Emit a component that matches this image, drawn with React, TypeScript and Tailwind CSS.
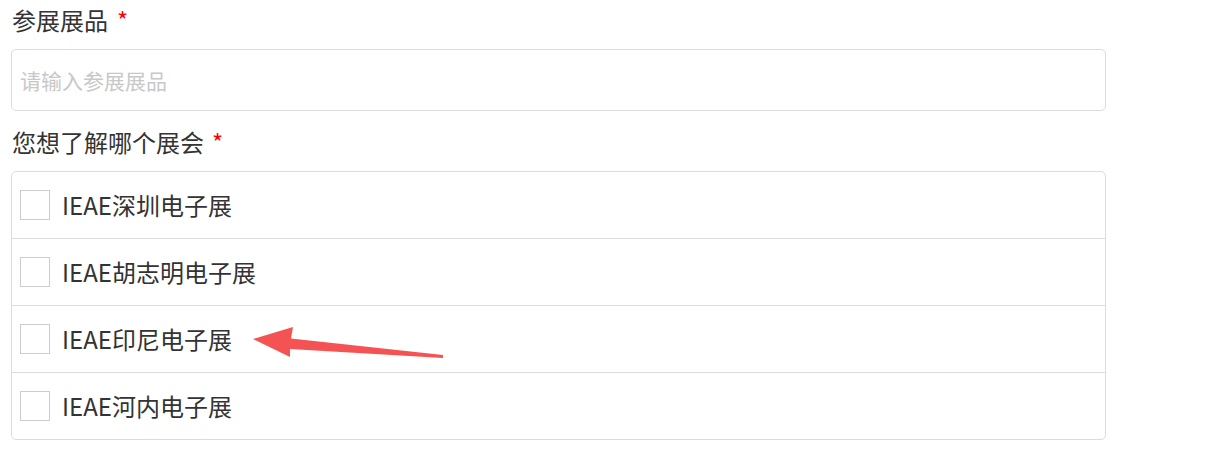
import React from "react";

const options = ["IEAE深圳电子展", "IEAE胡志明电子展", "IEAE印尼电子展", "IEAE河内电子展"];

export default function App() {
  return (
    <div
      className="relative w-[1215px] h-[450px] bg-white text-[#333]"
      style={{ fontFamily: '"Noto Sans CJK SC", "Noto Sans", sans-serif' }}
    >
      <div className="ml-[11px] w-[1095px]">
        <div className="h-[42px] leading-[40px] text-[24px] pl-px">
          参展展品<span className="ml-[9px] text-[#ff0000]">*</span>
        </div>
        <input
          className="mt-[7px] block w-full h-[62px] border border-[#dcdcdc] rounded-[5px] px-[8px] text-[21px] outline-none placeholder:text-[#c8c8c8]"
          placeholder="请输入参展展品"
        />
        <div className="mt-[11px] h-[42px] leading-[40px] text-[24px] pl-px">
          您想了解哪个展会<span className="ml-[8px] text-[#ff0000]">*</span>
        </div>
        <div className="mt-[7px] border border-[#dcdcdc] rounded-[5px]">
          {options.map((o, i) => (
            <div
              key={o}
              className={
                i === 0
                  ? "h-[66px] flex items-center pl-[8px]"
                  : "h-[67px] border-t border-[#dcdcdc] flex items-center pl-[8px]"
              }
            >
              <div className="w-[30px] h-[30px] border border-[#cccccc] bg-white" />
              <span className="ml-[12px] text-[24px]">{o}</span>
            </div>
          ))}
        </div>
      </div>
      <svg className="absolute left-0 top-0 pointer-events-none" width="1215" height="450">
        <polygon
          points="253,339 293,327 291,338.5 443,355 443,358 290,349 290,357"
          fill="#f55353"
        />
      </svg>
    </div>
  );
}
